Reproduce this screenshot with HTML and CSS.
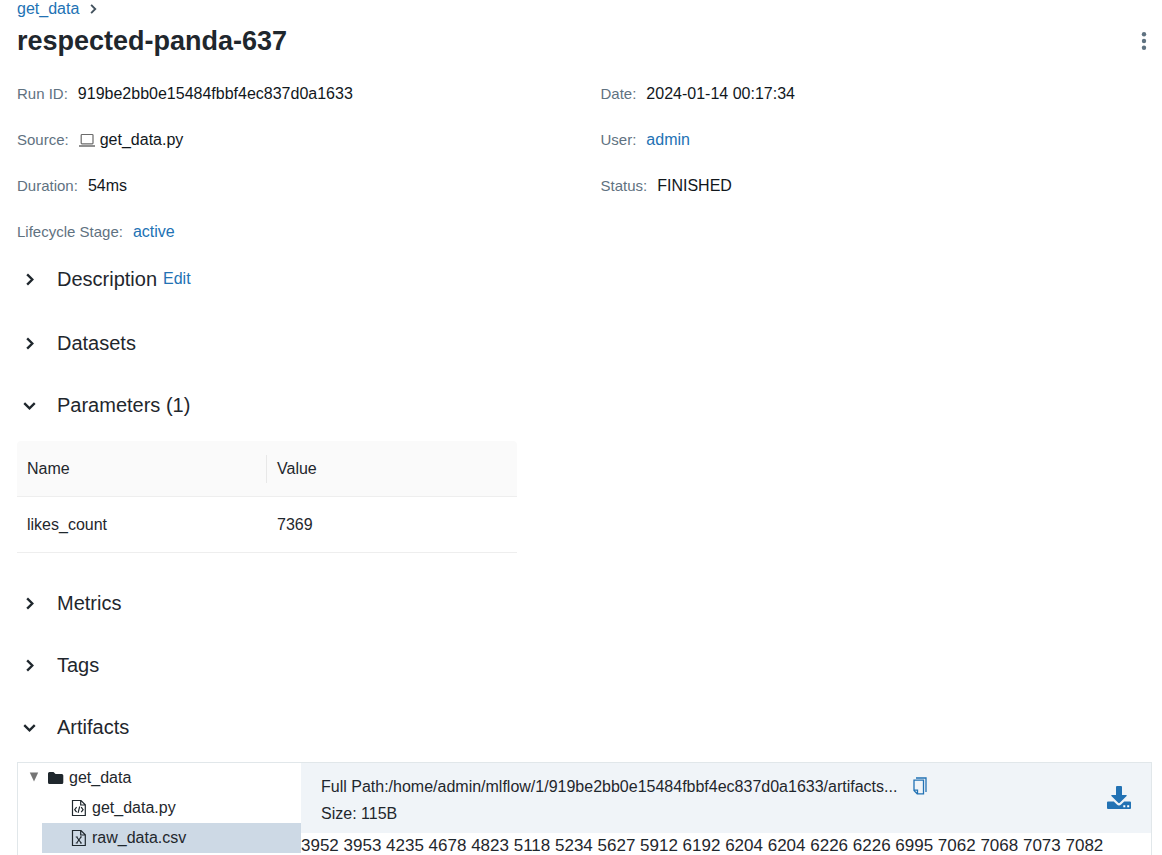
FILE: index.html
```html
<!DOCTYPE html>
<html lang="en">
<head>
<meta charset="utf-8">
<title>respected-panda-637</title>
<link rel="stylesheet" href="styles.css">
</head>
<body>
<svg class="sprite" aria-hidden="true">
  <symbol id="chevron-right" viewBox="0 0 16 16"><path d="M5.500 2.500 11 8l-5.500 5.500" fill="none" stroke="currentColor" stroke-width="2.500"/></symbol>
  <symbol id="chevron-down" viewBox="0 0 16 16"><path d="M2.400 5.500 8 11l5.600-5.500" fill="none" stroke="currentColor" stroke-width="2.500"/></symbol>
</svg>
<main class="page">
  <nav class="breadcrumb" aria-label="Breadcrumb">
    <a href="#experiment">get_data</a>
    <svg class="breadcrumb-icon" aria-hidden="true"><use href="#chevron-right"/></svg>
  </nav>
  <header class="title-row">
    <h1 class="title">respected-panda-637</h1>
    <button class="menu-button" type="button" aria-label="More actions">
      <svg width="6" height="20" viewBox="0 0 6 20"><g fill="#5f7281"><circle cx="3" cy="3.300" r="2.200"/><circle cx="3" cy="10" r="2.200"/><circle cx="3" cy="16.700" r="2.200"/></g></svg>
    </button>
  </header>

  <dl class="meta">
    <div class="meta-item"><dt>Run ID:</dt><dd>919be2bb0e15484fbbf4ec837d0a1633</dd></div>
    <div class="meta-item"><dt>Date:</dt><dd>2024-01-14 00:17:34</dd></div>
    <div class="meta-item"><dt>Source:</dt><dd class="source"><svg width="16" height="14" viewBox="0 0 16 14" fill="none" stroke="#6b6b6b" aria-hidden="true"><rect x="2.200" y="1.500" width="11.800" height="9.300" rx=".8" stroke-width="1.200"/><path d="M0 13h16" stroke-width="1.500"/></svg>get_data.py</dd></div>
    <div class="meta-item"><dt>User:</dt><dd><a href="#user">admin</a></dd></div>
    <div class="meta-item"><dt>Duration:</dt><dd>54ms</dd></div>
    <div class="meta-item"><dt>Status:</dt><dd>FINISHED</dd></div>
    <div class="meta-item"><dt>Lifecycle Stage:</dt><dd><a href="#active">active</a></dd></div>
  </dl>

  <section class="section">
    <div class="section-head section-head-tall">
      <h2><button class="toggle" type="button" aria-expanded="false"><svg class="toggle-icon" aria-hidden="true"><use href="#chevron-right"/></svg>Description</button></h2>
      <button class="edit" type="button">Edit</button>
    </div>
  </section>
  <section class="section">
    <div class="section-head"><h2><button class="toggle" type="button" aria-expanded="false"><svg class="toggle-icon" aria-hidden="true"><use href="#chevron-right"/></svg>Datasets</button></h2></div>
  </section>
  <section class="section">
    <div class="section-head"><h2><button class="toggle" type="button" aria-expanded="true"><svg class="toggle-icon" aria-hidden="true"><use href="#chevron-down"/></svg>Parameters (1)</button></h2></div>
    <table class="params">
      <thead><tr><th scope="col"><span class="th-label">Name</span></th><th scope="col">Value</th></tr></thead>
      <tbody><tr><td>likes_count</td><td>7369</td></tr></tbody>
    </table>
  </section>
  <section class="section">
    <div class="section-head"><h2><button class="toggle" type="button" aria-expanded="false"><svg class="toggle-icon" aria-hidden="true"><use href="#chevron-right"/></svg>Metrics</button></h2></div>
  </section>
  <section class="section">
    <div class="section-head"><h2><button class="toggle" type="button" aria-expanded="false"><svg class="toggle-icon" aria-hidden="true"><use href="#chevron-right"/></svg>Tags</button></h2></div>
  </section>
  <section class="section">
    <div class="section-head"><h2><button class="toggle" type="button" aria-expanded="true"><svg class="toggle-icon" aria-hidden="true"><use href="#chevron-down"/></svg>Artifacts</button></h2></div>
    <div class="artifacts">
      <ul class="tree">
        <li>
          <div class="node node-root">
            <svg class="caret" width="10" height="12" viewBox="0 0 10 12" aria-hidden="true"><path d="M.8.5h8.400L5 9.500z" fill="#757575"/></svg>
            <svg width="16" height="14" viewBox="0 0 16 14" aria-hidden="true"><path d="M0 2.500Q0 1 1.500 1h4l2 2h6.300Q15.300 3 15.300 4.500v7q0 1.500-1.500 1.500h-12.300Q0 13 0 11.500z" fill="#1f272d"/></svg>
            <span>get_data</span>
          </div>
          <ul class="tree-children">
            <li class="node node-file">
              <svg width="16" height="18" viewBox="0 0 16 18" fill="none" stroke="#1f272d" stroke-width="1.200" aria-hidden="true"><path d="M1.500 1.500h8.500l4.300 4.300v10.700H1.500zM9.700 1.500v4.500h4.500"/><path d="M5.600 8.200 3.700 10.700l1.900 2.500M10.200 8.200l1.900 2.500-1.900 2.500M8.700 7.500l-1.600 6.400"/></svg>
              <span>get_data.py</span>
            </li>
            <li class="node node-file node-selected">
              <svg width="16" height="18" viewBox="0 0 16 18" fill="none" stroke="#1f272d" stroke-width="1.200" aria-hidden="true"><path d="M1.500 1.500h8.500l4.300 4.300v10.700H1.500zM9.700 1.500v4.500h4.500"/><path d="M5.700 8l4.400 6M10 8l-4.300 6"/><path d="M4.700 7.900h2M9 7.900h2M4.700 14.100h2M9 14.100h2" stroke-width=".8"/></svg>
              <span>raw_data.csv</span>
            </li>
          </ul>
        </li>
      </ul>
      <div class="viewer">
        <div class="viewer-head">
          <div class="file-info">
            <div class="file-path"><span class="path-text">Full Path:/home/admin/mlflow/1/919be2bb0e15484fbbf4ec837d0a1633/artifacts...</span>
              <button class="copy" type="button" aria-label="Copy path"><svg width="14" height="18" viewBox="0 0 14 18" fill="none" stroke="#2272b4" stroke-width="1.300"><path d="M1 3.200h9.500v13.600H4.200L1 13.600zM1 13.200h3.500v3.400"/><path d="M3 1h10v14"/></svg></button>
            </div>
            <div>Size: 115B</div>
          </div>
          <button class="download" type="button" aria-label="Download artifact"><svg width="26" height="24" viewBox="0 0 26 24"><path d="M10 1q0-1 1-1h4q1 0 1 1v8h4q1.300 0 .6 1l-6.800 6.800q-.8.700-1.600 0L5.400 10q-.7-1 .6-1h4z" fill="#2272b4"/><path d="M2 15.500h5.800l3.100 3.100q2.100 1.700 4.200 0l3.100-3.100H24q1 0 1 1V22q0 1-1 1H2q-1 0-1-1v-5.500q0-1 1-1z" fill="#2272b4"/><path d="M17.300 19.300h2v2h-2zM21.200 19.300h2v2h-2z" fill="#fff"/></svg></button>
        </div>
        <div class="file-content">3952 3953 4235 4678 4823 5118 5234 5627 5912 6192 6204 6204 6226 6226 6995 7062 7068 7073 7082</div>
      </div>
    </div>
  </section>
</main>
</body>
</html>
```

FILE: styles.css
```css
* { box-sizing: border-box; }

body {
  margin: 0;
  background: #fff;
  color: #1f272d;
  font: 16px/20px "Liberation Sans", Arial, sans-serif;
}

button {
  padding: 0;
  border: 0;
  background: none;
  color: inherit;
  font: inherit;
  cursor: pointer;
}

svg { display: block; flex: none; }
ul { margin: 0; padding: 0; list-style: none; }
a { color: #2272b4; text-decoration: none; }

.sprite { position: absolute; width: 0; height: 0; }

.page {
  height: 100vh;
  overflow: hidden;
  padding: 0 10px 0 17px;
}

.breadcrumb { display: flex; align-items: center; gap: 8px; height: 18px; }
.breadcrumb-icon { width: 12px; height: 12px; color: #43525e; }

.title-row {
  display: flex;
  align-items: center;
  justify-content: space-between;
  height: 46px;
}
.title { margin: 0; font-size: 27px; line-height: 32px; }
.menu-button { display: grid; place-items: center; width: 16px; height: 32px; }

.meta {
  display: grid;
  grid-template-columns: 1fr 1fr;
  gap: 26px 32px;
  margin: 20px 0 23px;
}
.meta-item { display: flex; align-items: center; gap: 10px; }
.meta dt { color: #5f7281; font-size: 15px; }
.meta dd { margin: 0; color: #11171c; }
.meta a { color: #2272b4; }
.source { display: flex; align-items: center; gap: 5px; }

.section { margin-bottom: 38px; }
.section-head { display: flex; align-items: center; gap: 6px; min-height: 24px; }
.section-head-tall { min-height: 28px; }
.section-head h2 { margin: 0; font-size: 20px; font-weight: 400; line-height: 24px; }
.toggle { display: flex; align-items: center; gap: 20px; padding-left: 5px; }
.toggle-icon { width: 15px; height: 15px; }
.edit { color: #2272b4; line-height: 24px; }

.params {
  width: 500px;
  max-width: 100%;
  margin-top: 24px;
  border-collapse: separate;
  border-spacing: 0;
  table-layout: fixed;
}
.params th,
.params td {
  height: 56px;
  padding: 0 10px;
  border-bottom: 1px solid #eee;
  font-weight: 400;
  text-align: left;
}
.params th { background: #fafafa; }
.params th:first-child { padding-right: 0; border-top-left-radius: 4px; }
.params th:last-child { border-top-right-radius: 4px; }
.th-label { display: block; padding: 4px 0; border-right: 1px solid #e8e8e8; }

.artifacts {
  display: flex;
  margin-top: 23px;
  border: 1px solid #e1e7ea;
}
.tree { width: 283px; flex: none; min-height: 120px; }
.node { display: flex; align-items: center; height: 30px; }
.node-root { gap: 5px; padding-left: 11px; }
.caret { margin-right: 4px; }
.tree-children { padding-left: 24px; }
.node-file { gap: 5px; padding-left: 29px; }
.node-selected { background: #cdd9e5; }

.viewer { flex: 1; min-width: 0; }
.viewer-head {
  display: flex;
  align-items: center;
  justify-content: space-between;
  padding: 10px 19px 6px 20px;
  background: #f0f4f8;
  line-height: 27px;
}
.file-info { min-width: 0; }
.file-path { display: flex; align-items: center; gap: 16px; }
.path-text { overflow: hidden; text-overflow: ellipsis; white-space: nowrap; }
.copy { padding-bottom: 2px; }
.download { padding-bottom: 4px; }
.file-content { padding-top: 4px; font-size: 17px; line-height: 18px; }
```
